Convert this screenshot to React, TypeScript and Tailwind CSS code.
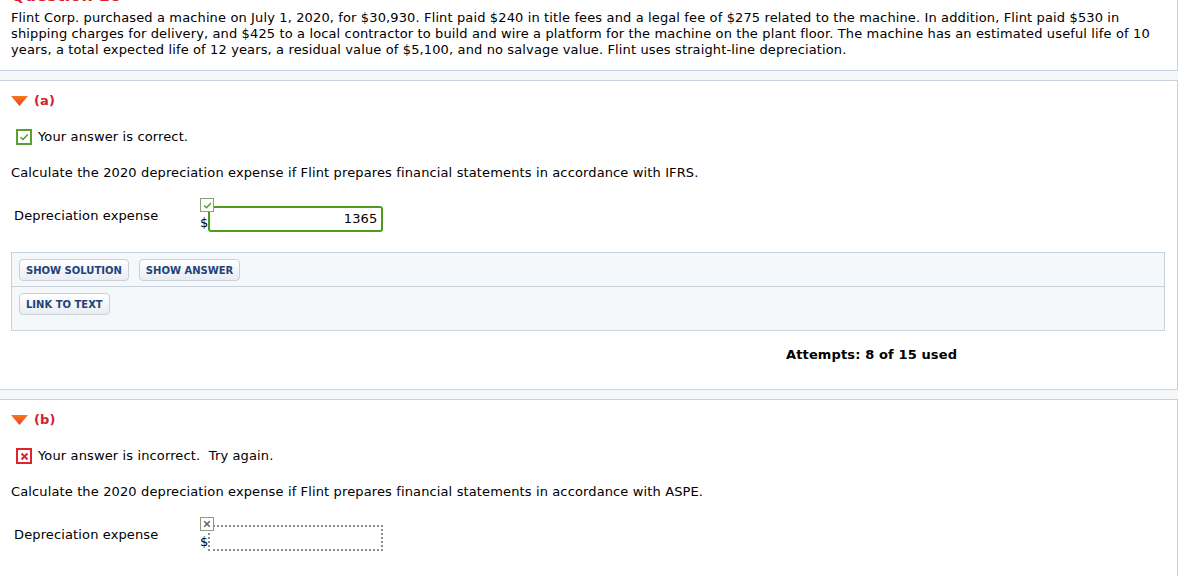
import React from "react";

const Triangle = () => (
  <svg width="17" height="10" viewBox="0 0 17 10" className="shrink-0">
    <defs>
      <linearGradient id="tri" x1="0" y1="0" x2="0" y2="1">
        <stop offset="0" stopColor="#f7791f" />
        <stop offset="1" stopColor="#e8401c" />
      </linearGradient>
    </defs>
    <polygon points="0,0 17,0 8.5,10" fill="url(#tri)" />
  </svg>
);

const CorrectBox = () => (
  <span className="flex h-[16px] w-[16px] shrink-0 items-center justify-center border-2 border-[#5c9e31] bg-white">
    <svg width="10" height="8" viewBox="0 0 10 8">
      <path d="M1.5 4.2 L4 6.5 L8.7 1.5" fill="none" stroke="#4a9a2a" strokeWidth="1.4" />
    </svg>
  </span>
);

const WrongBox = () => (
  <span className="flex h-[16px] w-[16px] shrink-0 items-center justify-center border-2 border-[#e0242b] bg-white">
    <svg width="9" height="9" viewBox="0 0 9 9">
      <path d="M1.5 1.5 L7.5 7.5 M7.5 1.5 L1.5 7.5" fill="none" stroke="#e0242b" strokeWidth="2" />
    </svg>
  </span>
);

const Btn = ({ children }: { children: React.ReactNode }) => (
  <button className="h-[22px] rounded-[4px] border border-[#c9d0da] bg-gradient-to-b from-white to-[#e9edf2] px-[6px] text-[10px] font-bold tracking-normal text-[#22427a]">
    {children}
  </button>
);

function AnswerField({ ok, value }: { ok: boolean; value?: string }) {
  return (
    <div className="relative flex h-[34px] items-end">
      <span className="absolute left-0 top-0 flex h-[14px] w-[14px] items-center justify-center border border-[#8aa07a] bg-white">
        {ok ? (
          <svg width="9" height="7" viewBox="0 0 9 7">
            <path d="M1 3.5 L3.5 5.8 L8 1" fill="none" stroke="#4a9a2a" strokeWidth="1.3" />
          </svg>
        ) : (
          <svg width="8" height="8" viewBox="0 0 8 8">
            <path d="M1.2 1.2 L6.8 6.8 M6.8 1.2 L1.2 6.8" fill="none" stroke="#666" strokeWidth="1.6" />
          </svg>
        )}
      </span>
      <span className="pb-[1px] leading-[16px]">$</span>
      {ok ? (
        <div className="flex h-[26px] w-[175px] items-center justify-end rounded-[3px] border-2 border-[#4d9a1e] bg-white px-[4px]">
          {value}
        </div>
      ) : (
        <div className="h-[26px] w-[175px] border-2 border-dotted border-[#8c8c8c] bg-white" />
      )}
    </div>
  );
}

function Part({
  label, ok, message, standard, value, children,
}: {
  label: string; ok: boolean; message: string; standard: string; value?: string; children?: React.ReactNode;
}) {
  return (
    <div className="border-y border-r border-[#c8d2dc] bg-white pt-[12px]">
      <div className="flex items-center gap-[6px] pl-[11px] leading-[16px]">
        <Triangle />
        <span className="font-bold text-[#d4202a]">{label}</span>
      </div>
      <div className="mt-[20px] flex items-center gap-[6px] pl-[16px] leading-[16px]">
        {ok ? <CorrectBox /> : <WrongBox />}
        <span className="whitespace-pre">{message}</span>
      </div>
      <p className="mt-[20px] pl-[11px] leading-[16px]">
        Calculate the 2020 depreciation expense if Flint prepares financial statements in accordance with {standard}.
      </p>
      <div className="mt-[17px] flex items-start">
        <div className="w-[200px] pl-[14px] pt-[10px] leading-[16px]">Depreciation expense</div>
        <AnswerField ok={ok} value={value} />
      </div>
      {children}
    </div>
  );
}

export default function App() {
  return (
    <div className="min-h-[576px] bg-[#f5f8fb] font-['DejaVu_Sans','Liberation_Sans',sans-serif] text-[13px] tracking-[0.13px] text-black">
      <div className="overflow-hidden border-b border-r border-[#c8d2dc] bg-white pb-[12px] pl-[11px] pr-[19px]">
        <div className="-mt-[12px] mb-[6px] text-[16px] font-bold leading-[16px] text-[#d4202a]">Question 10</div>
        <p className="leading-[16px]">
          Flint Corp. purchased a machine on July 1, 2020, for $30,930. Flint paid $240 in title fees and a legal fee of $275 related to the machine. In addition, Flint paid $530 in shipping charges for delivery, and $425 to a local contractor to build and wire a platform for the machine on the plant floor. The machine has an estimated useful life of 10 years, a total expected life of 12 years, a residual value of $5,100, and no salvage value. Flint uses straight-line depreciation.
        </p>
      </div>

      <div className="mt-[9px]">
        <Part label="(a)" ok message="Your answer is correct." standard="IFRS" value="1365">
          <div className="ml-[11px] mr-[12px] mt-[20px] border border-[#c8d2dc] bg-[#f5f8fb]">
            <div className="flex gap-[10px] border-b border-[#c8d2dc] px-[7px] pb-[5px] pt-[6px]">
              <Btn>SHOW SOLUTION</Btn>
              <Btn>SHOW ANSWER</Btn>
            </div>
            <div className="h-[43px] px-[7px] pt-[6px]">
              <Btn>LINK TO TEXT</Btn>
            </div>
          </div>
          <div className="pb-[26px] pl-[786px] pt-[16px] font-bold leading-[16px]">Attempts: 8 of 15 used</div>
        </Part>
      </div>

      <div className="mt-[9px]">
        <Part label="(b)" ok={false} message="Your answer is incorrect.  Try again." standard="ASPE">
          <div className="h-[25px]" />
        </Part>
      </div>
    </div>
  );
}
